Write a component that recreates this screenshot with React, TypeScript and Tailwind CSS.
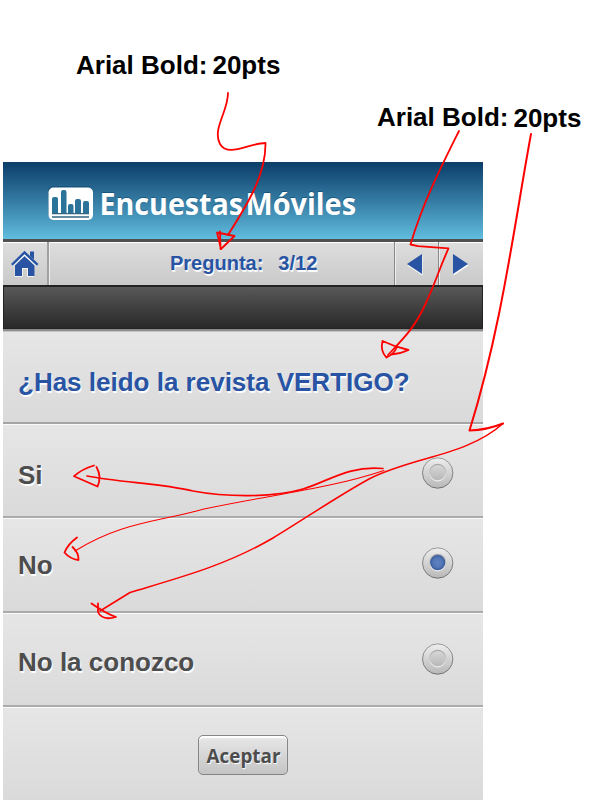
import React from "react";

const ARIAL = "font-['Liberation_Sans',Arial,sans-serif] font-bold";
const EMBOSS = "[text-shadow:1px_2px_1px_#fff]";
const ROW =
  "flex justify-between border-b-2 border-[#ababab] bg-linear-to-b from-[#e6e6e6] to-[#dadada] pl-[15px] pr-[29px] shadow-[inset_0_1px_0_#fafafa]";

function Radio({ checked = false }: { checked?: boolean }) {
  const id = checked ? "on" : "off";
  return (
    <svg width="32" height="32" viewBox="0 0 32 32" className="block">
      <defs>
        <linearGradient id={"ring" + id} x1="0" y1="0" x2="0" y2="1">
          <stop offset="0" stopColor="#eeeeee" />
          <stop offset="1" stopColor="#b8b8b8" />
        </linearGradient>
        <linearGradient id={"edge" + id} x1="0" y1="0" x2="0" y2="1">
          <stop offset="0" stopColor="#999" />
          <stop offset="1" stopColor="#707070" />
        </linearGradient>
        <linearGradient id={"well" + id} x1="0" y1="0" x2="0" y2="1">
          <stop offset="0" stopColor="#a5a5a5" />
          <stop offset="1" stopColor="#ececec" />
        </linearGradient>
        <linearGradient id={"dot" + id} x1="0" y1="0" x2="0" y2="1">
          <stop offset="0" stopColor="#d8d8d8" />
          <stop offset="1" stopColor="#b6b6b6" />
        </linearGradient>
        <radialGradient id="blue">
          <stop offset="0" stopColor="#6082c0" />
          <stop offset="0.6" stopColor="#5376b6" />
          <stop offset="1" stopColor="#2f5191" />
        </radialGradient>
      </defs>
      <circle cx="15.7" cy="16" r="15.2" fill={`url(#ring${id})`} stroke={`url(#edge${id})`} />
      <circle
        cx="15.7"
        cy="15.6"
        r="8.2"
        fill={checked ? "url(#blue)" : `url(#dot${id})`}
        stroke={`url(#well${id})`}
        strokeWidth="1.2"
      />
    </svg>
  );
}

function Logo() {
  return (
    <svg width="320" height="44" viewBox="40 180 320 44" className="ml-[37px] mt-[18px] block overflow-visible">
      <rect x="48" y="186" width="44.500" height="33" rx="5" fill="#0c4770" opacity="0.55" />
      <rect x="48.500" y="187.500" width="44.500" height="32.500" rx="5" fill="#fff" />
      <g fill="#2b7398">
        <path d="M52 214v-15q0-2 2-2h2q2 0 2 2v15zM61 214v-22q0-2 2-2h1.500q2 0 2 2v22zM68 214v-8q0-2 2-2h1.500q2 0 2 2v8zM75 214v-13q0-2 2-2h2q2 0 2 2v13zM83 214v-11q0-2 2-2h2q2 0 2 2v11z" />
        <path d="M52 213h37v1.200H52zM52 216.300h37v1.500H52z" fill="#32667f" />
      </g>
      <g className="font-['Open_Sans','Noto_Sans',sans-serif] text-[31px] font-bold">
        <g fill="#0c4770" opacity="0.6" aria-hidden="true">
          <text x="99.500" y="214" textLength="143" lengthAdjust="spacingAndGlyphs">
            Encuestas
          </text>
          <text x="245.500" y="214" textLength="110" lengthAdjust="spacingAndGlyphs">
            Móviles
          </text>
        </g>
        <g fill="#fff">
          <text x="99.500" y="215" textLength="143.500" lengthAdjust="spacingAndGlyphs">
            Encuestas
          </text>
          <text x="245.500" y="215" textLength="110.500" lengthAdjust="spacingAndGlyphs">
            Móviles
          </text>
        </g>
      </g>
    </svg>
  );
}

function HomeIcon() {
  return (
    <svg width="30" height="28" viewBox="0 0 30 28" className="block">
      <g transform="translate(0 1.500)" fill="#fff" stroke="#fff">
        <path d="M5 15.500 14.500 6l9.500 9.500V25h-6.500v-8h-5v8H5z" strokeWidth=".5" />
        <path d="M2 14 14.500 2.500 27 14" fill="none" strokeWidth="2.500" />
      </g>
      <g fill="#2854a3">
        <path d="M20 1.500h4v8L20 6z" />
        <path d="M1 14 14.500.800 28.500 14l-1.700 1.800L14.500 4.200 2.700 15.800z" />
        <path d="M5 15.600 14.500 6.200 24.500 15.600V26h-6.500v-8h-6v8H5z" />
      </g>
    </svg>
  );
}

function Arrow({ right = false }: { right?: boolean }) {
  const d = right ? "M2 1v20l15-10z" : "M17 1v20L2 11z";
  return (
    <svg width="20" height="24" viewBox="0 0 20 24" className="block">
      <path d={d} fill="#fff" transform="translate(.5 1.500)" />
      <path d={d} fill="#2854a3" />
    </svg>
  );
}

function Annotations() {
  return (
    <svg width="600" height="800" viewBox="0 0 600 800" className="pointer-events-none absolute left-0 top-0">
      <g fill="none" stroke="#ff0000" strokeLinecap="round" strokeLinejoin="round" strokeWidth="1.800">
        <path d="M228 93C228 112 212 129 220 144C228 158 249 143 265.500 143C266 175 247 205 228 235" />
        <path d="M217 232.500 234.500 236 221 249ZM220 231.500 220.500 249" />
        <path d="M459 131C443 163 423 202 410.500 244.500L418 246.200 448.500 248.300C438 272 435 284 425 305C415 327 404 338 388 355" />
        <path d="M382.500 341Q395 347 408.500 350Q400 354 391 354.500M382.500 341Q380 351 386.500 357.500Q394 354 397 347" />
        <path d="M531 134C514 226 502 326 469.500 430.500Q487 430 503 423.500" strokeWidth="2" />
        <path d="M503 423.500C467 456 411 457 369 479C333 499 303 520 273 538C225 566 178 578 130 592.500L100 611" strokeWidth="1.500" />
        <path d="M87 476C124 483 159 483 193 491C225 497 272 498 303 489C327 482 349 465 383 468.500" strokeWidth="1.700" />
        <path d="M384 470.500C329 489 269 495 204 509C158 522 121 522 75 551" strokeWidth="1.100" />
        <path d="M94 465.500Q82 469 74 476.200L97.500 486.500Q102 477 96.500 467" />
        <path d="M77 537.500Q68 544 64.500 552.500Q70 559 78.500 560Q79 553 72.500 547" />
        <path d="M91.500 603.500C98 608 107 614 116 617Q102 621 98 612L98 603.500" />
      </g>
    </svg>
  );
}

export default function App() {
  return (
    <div className={`relative h-[800px] w-[600px] overflow-hidden bg-white text-[26px] leading-[30px] text-black ${ARIAL}`}>
      <div className="flex h-[162px] flex-col pt-[50px]">
        <div className="ml-[76px] flex gap-[5px]">
          <span>Arial Bold:</span>
          <span>20pts</span>
        </div>
        <div className="ml-[377px] mt-[22px] flex gap-[5px]">
          <span>Arial Bold:</span>
          <span className="mt-px">20pts</span>
        </div>
      </div>
      <main className="ml-[3px] flex w-[480px] flex-col">
        <header className="h-[77px] bg-linear-to-b from-[#0b3e69] to-[#61bddf]">
          <div className="flex">
            <Logo />
          </div>
        </header>
        <nav className="flex h-[46px] items-stretch border-t-[3px] border-[#505050] bg-linear-to-b from-[#dedede] to-[#c9c9c9] text-[20px] text-[#2854a3] shadow-[inset_0_1px_0_#fff]">
          <button className="flex w-[46px] items-start border-r-2 border-[#a0a0a0] pl-[7px] pt-[8px]">
            <HomeIcon />
          </button>
          <div className={`flex flex-1 gap-[15px] border-l border-[#eee] pl-[120px] pt-[6px] ${EMBOSS}`}>
            <span>Pregunta:</span>
            <span>3/12</span>
          </div>
          <button className="flex w-[44px] border-l border-[#888] pl-[10px] pt-[11px] shadow-[inset_1px_0_0_#eee]">
            <Arrow />
          </button>
          <button className="flex w-[45px] border-l border-[#888] pl-[12px] pt-[11px] shadow-[inset_1px_0_0_#eee]">
            <Arrow right />
          </button>
        </nav>
        <div className="h-[44px] border border-t-2 border-[#222] bg-linear-to-b from-[#595959] to-[#292929]" />
        <section className="h-[95px] border-b-2 border-[#a5a5a5] bg-linear-to-b from-[#e6e6e6] to-[#dadada] pl-[15px] pt-[38px] text-[#2854a3] shadow-[inset_0_2px_0_#8c8c8c,inset_0_3px_0_#c4c4c4]">
          <h1 className={EMBOSS}>¿Has leido la revista VERTIGO?</h1>
        </section>
        <div className={`${ROW} h-[94px] pt-[33px] text-[#4d4d4d]`}>
          <span className={`mt-[3px] ${EMBOSS}`}>Si</span>
          <Radio />
        </div>
        <div className={`${ROW} h-[95px] pt-[29px] text-[#4d4d4d]`}>
          <span className={`mt-[3px] ${EMBOSS}`}>No</span>
          <Radio checked />
        </div>
        <div className={`${ROW} h-[94px] pt-[30px] text-[#4d4d4d]`}>
          <span className={`mt-[4px] ${EMBOSS}`}>No la conozco</span>
          <Radio />
        </div>
        <footer className="flex h-[93px] items-start justify-center bg-linear-to-b from-[#e6e6e6] to-[#dadada] pt-[28px] shadow-[inset_0_1px_0_#fafafa]">
          <button className="h-[40px] w-[90px] rounded-[5px] border-[1.5px] border-[#858585] bg-linear-to-b from-[#e8e8e8] to-[#c4c4c4] shadow-[inset_0_2px_1px_#fff]">
            <svg width="86" height="36" className="block overflow-visible">
              <text
                x="7.500"
                y="25.500"
                textLength="74"
                lengthAdjust="spacingAndGlyphs"
                fill="#4d4d4d"
                className="font-['Open_Sans','Noto_Sans',sans-serif] text-[20px] font-bold [text-shadow:1px_1px_1px_#fff]"
              >
                Aceptar
              </text>
            </svg>
          </button>
        </footer>
      </main>
      <Annotations />
    </div>
  );
}
